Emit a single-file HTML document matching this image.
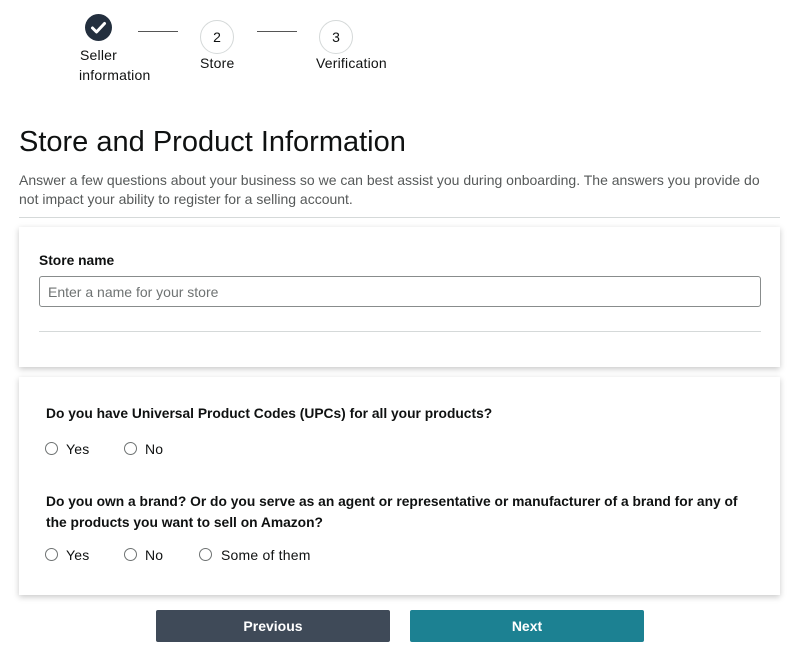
<!DOCTYPE html>
<html><head><meta charset="utf-8"><style>
*{margin:0;padding:0;box-sizing:border-box}
body{width:795px;height:656px;background:#fff;font-family:"Liberation Sans",sans-serif;color:#0f1111;position:relative;overflow:hidden}
.a{position:absolute;white-space:nowrap}
.c{position:absolute;border:1px solid #d5d9d9;border-radius:50%;width:34px;height:34px;text-align:center;line-height:32px;font-size:14px;color:#0f1111;background:#fff}
.ln{position:absolute;height:1px;background:#555;top:31px;width:40px}
.lbl{font-size:14px;color:#0f1111;letter-spacing:.2px}
.card{position:absolute;left:19px;width:761px;background:#fff;box-shadow:0 2px 6px rgba(0,0,0,.22)}
.r{position:absolute;width:13px;height:13px;border:1px solid #6f7373;border-radius:50%}
.q{font-size:13.8px;font-weight:bold}
.btn{position:absolute;top:610px;width:234px;height:32px;border-radius:2px;color:#fff;font-size:14px;font-weight:bold;text-align:center;line-height:32px}
</style></head><body>
<svg class="a" style="left:85px;top:14px" width="27" height="27" viewBox="0 0 27 27"><circle cx="13.5" cy="13.5" r="13.5" fill="#232f3e"/><path d="M7.5 14 L11.5 18 L19.5 9.5" stroke="#fff" stroke-width="3" fill="none" stroke-linecap="round" stroke-linejoin="round"/></svg>
<div class="ln" style="left:138px"></div>
<div class="ln" style="left:257px"></div>
<div class="c" style="left:200px;top:20px">2</div>
<div class="c" style="left:319px;top:20px">3</div>
<div class="a lbl" style="left:80px;top:47px">Seller</div>
<div class="a lbl" style="left:79px;top:67px">information</div>
<div class="a lbl" style="left:200px;top:55px">Store</div>
<div class="a lbl" style="left:316px;top:55px">Verification</div>
<div class="a" style="left:19px;top:126px;font-size:29px;color:#0f1111">Store and Product Information</div>
<div class="a" style="left:19px;top:171px;font-size:14px;line-height:19px;color:#565959;white-space:normal;width:752px">Answer a few questions about your business so we can best assist you during onboarding. The answers you provide do not impact your ability to register for a selling account.</div>
<div class="a" style="left:19px;top:217px;width:761px;height:1px;background:#d5d9d9"></div>
<div class="card" style="top:227px;height:140px"></div>
<div class="a q" style="left:39px;top:253px">Store name</div>
<div class="a" style="left:39px;top:276px;width:722px;height:31px;border:1px solid #888c8c;border-radius:3px;font-size:14px;color:#6f7373;padding:7px 8px">Enter a name for your store</div>
<div class="a" style="left:39px;top:331px;width:722px;height:1px;background:#d5d9d9"></div>
<div class="card" style="top:377px;height:218px"></div>
<div class="a q" style="left:46px;top:406px">Do you have Universal Product Codes (UPCs) for all your products?</div>
<div class="r" style="left:45px;top:442px"></div><div class="a lbl" style="left:66px;top:441px">Yes</div>
<div class="r" style="left:124px;top:442px"></div><div class="a lbl" style="left:145px;top:441px">No</div>
<div class="a q" style="left:46px;top:491px;line-height:21px">Do you own a brand? Or do you serve as an agent or representative or manufacturer of a brand for any of<br>the products you want to sell on Amazon?</div>
<div class="r" style="left:45px;top:548px"></div><div class="a lbl" style="left:66px;top:547px">Yes</div>
<div class="r" style="left:124px;top:548px"></div><div class="a lbl" style="left:145px;top:547px">No</div>
<div class="r" style="left:199px;top:548px"></div><div class="a lbl" style="left:221px;top:547px">Some of them</div>
<div class="btn" style="left:156px;background:#3f4a58">Previous</div>
<div class="btn" style="left:410px;background:#1c8192">Next</div>
</body></html>
